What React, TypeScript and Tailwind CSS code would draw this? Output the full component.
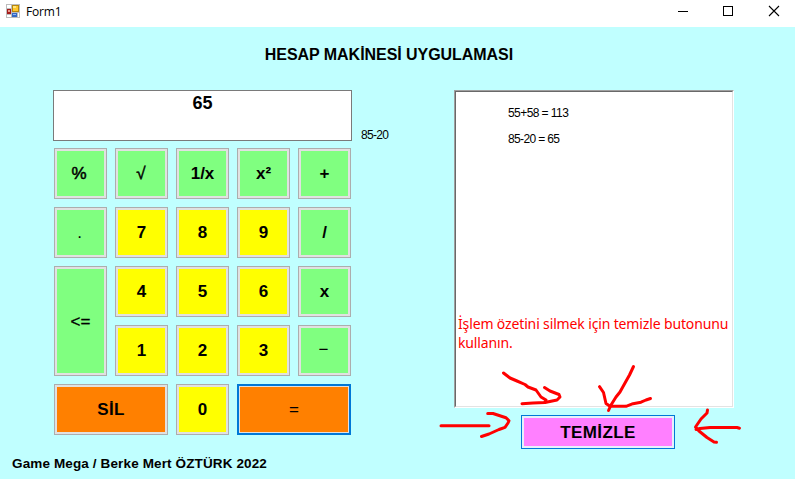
type Tone = 'green' | 'yellow' | 'orange';

interface Key {
  label: string;
  tone: Tone;
  span?: string;
  text?: string;
  focused?: boolean;
}

const tones: Record<Tone, string> = {
  green: 'bg-[#80ff80]',
  yellow: 'bg-[#ffff00]',
  orange: 'bg-[#ff8000]',
};

const keys: Key[] = [
  { label: '%', tone: 'green', text: 'font-normal pr-[3px] pb-px [-webkit-text-stroke:0.5px_#000]' },
  { label: '√', tone: 'green', text: 'font-normal pr-px [-webkit-text-stroke:0.5px_#000]' },
  { label: '1/x', tone: 'green' },
  { label: 'x²', tone: 'green' },
  { label: '+', tone: 'green' },
  { label: '.', tone: 'green', text: 'font-normal pr-[2px]' },
  { label: '7', tone: 'yellow' },
  { label: '8', tone: 'yellow' },
  { label: '9', tone: 'yellow' },
  { label: '/', tone: 'green' },
  { label: '<=', tone: 'green', span: 'row-span-2', text: 'font-normal [-webkit-text-stroke:0.3px_#000]' },
  { label: '4', tone: 'yellow' },
  { label: '5', tone: 'yellow' },
  { label: '6', tone: 'yellow' },
  { label: 'x', tone: 'green' },
  { label: '1', tone: 'yellow' },
  { label: '2', tone: 'yellow' },
  { label: '3', tone: 'yellow' },
  { label: '−', tone: 'green', text: 'font-normal pr-[2px] pb-[3px]' },
  { label: 'SİL', tone: 'orange', span: 'col-span-2', text: 'tracking-[0.3px]' },
  { label: '0', tone: 'yellow' },
  { label: '=', tone: 'orange', span: 'col-span-2', text: 'font-normal', focused: true },
];

function CalcKey({ label, tone, span = '', text = '', focused }: Key) {
  const frame = focused ? 'border-2 border-[#0078d7] p-px' : 'border border-[#adadad] p-[2px]';
  const weight = text.includes('font-normal') ? '' : 'font-bold';
  return (
    <button className={`flex bg-[#e1e1e1] ${frame} ${span}`}>
      <span className={`flex h-full w-full items-center justify-center text-[17px] leading-none ${weight} ${tones[tone]} ${text}`}>
        {label}
      </span>
    </button>
  );
}

function TitleBar() {
  return (
    <header className="flex h-[27px] items-start bg-white">
      <svg className="ml-[6px] mt-[4px]" width="14" height="14" shapeRendering="crispEdges">
        <rect width="14" height="14" fill="#bdbdbd" />
        <rect x="1" y="1" width="4" height="3" fill="#fff" />
        <rect x="1" y="11" width="4" height="2" fill="#fff" />
        <rect x="12" y="9" width="1" height="4" fill="#fff" />
        <rect x="1" y="5" width="4" height="5" fill="#a51c1c" />
        <rect x="2" y="6" width="2" height="2" fill="#ec9a8c" />
        <rect x="6" y="1" width="7" height="7" fill="#b8860b" />
        <rect x="7" y="2" width="5" height="5" fill="#ffc72c" />
        <rect x="7" y="2" width="3" height="2" fill="#ffe680" />
        <rect x="6" y="9" width="5" height="4" fill="#3569c4" />
        <rect x="7" y="10" width="3" height="1" fill="#8fb8f5" />
      </svg>
      <span className="ml-[6px] mt-[4px] font-['Open_Sans',sans-serif] text-[12px] leading-4 tracking-[-0.2px]">Form1</span>
      <svg className="ml-auto mr-[15px] mt-[4px]" width="103" height="14" fill="none" stroke="#000">
        <path d="M1 7.5H11" />
        <rect x="46.500" y="2.500" width="9" height="9" />
        <path d="M92 2L102 12M102 2L92 12" strokeWidth="1.100" />
      </svg>
    </header>
  );
}

function Arrows() {
  return (
    <svg className="pointer-events-none absolute left-0 top-0" width="795" height="479" fill="none" stroke="#f00" strokeWidth="3" strokeLinecap="round" strokeLinejoin="round">
      <path d="M503.500 373L510 378L517 381L525 384.500L528 387L536 390L541 397L546 400L545 402" />
      <path d="M544.500 387.500L550 391L559 394.500L560 397L557 400L545 402.500L533 403L522 403.700" />
      <path d="M441 425.700H489" />
      <path d="M487.700 413.500H493L506 417.700L509 420.700L508 423L505 427.300L499 429.500L489 434L481.500 436.500" />
      <path d="M633.500 366.500L629.500 375L625 383L620 392L616 397L611 405L608.500 410.500" />
      <path d="M599.500 386.700L603.500 392.500L606 403.500L610 406.300H626L633 403.700L641 402.200L646 400L650.500 398.500" />
      <path d="M739.500 428.200L737 427.500H710L700 428.500L696 429.500" />
      <path d="M707.500 410L707 413L701 419L695.500 427L699 431L707 437.500L714 442L716.500 442.300" />
    </svg>
  );
}

export default function App() {
  return (
    <div className="relative flex h-[479px] w-[795px] flex-col overflow-hidden bg-[#c0ffff] font-['Liberation_Sans',Arial,sans-serif] text-black">
      <TitleBar />
      <h1 className="mt-[19px] h-[18px] w-[778px] text-center text-[16px] font-bold leading-[18px] tracking-[-0.05px]">HESAP MAKİNESİ UYGULAMASI</h1>
      <main className="mt-[26px] flex h-[359px] items-start pl-[53px]">
        <section className="w-[299px]">
          <div className="h-[51px] border border-[#7a7a7a] bg-white pt-[2px] text-center text-[18px] font-bold leading-[20px]">65</div>
          <div className="ml-px mt-[7px] grid grid-cols-[repeat(5,53px)] grid-rows-[repeat(5,51px)] gap-2">
            {keys.map((key) => (
              <CalcKey key={key.label} {...key} />
            ))}
          </div>
        </section>
        <span className="ml-[9px] mt-[37px] w-[93px] text-[12px] leading-4 tracking-[-0.7px]">85-20</span>
        <section className="flex w-[280px] flex-col">
          <div className="h-[318px] border border-b-white border-l-[#a0a0a0] border-r-white border-t-[#a0a0a0]">
            <div className="flex h-full flex-col border border-b-[#e3e3e3] border-l-[#696969] border-r-[#e3e3e3] border-t-[#696969] bg-white pt-[13px]">
              <p className="ml-[52px] text-[12px] leading-4 tracking-[-0.57px]">55+58 = 113</p>
              <p className="ml-[52px] mt-[10px] text-[12px] leading-4 tracking-[-0.63px]">85-20 = 65</p>
              <p className="ml-[2px] mt-[167px] whitespace-nowrap font-['Noto_Sans',sans-serif] text-[14px] leading-[19px] tracking-[-0.14px] text-[#f00]">
                İşlem özetini silmek için temizle butonunu
                <br />
                kullanın.
              </p>
            </div>
          </div>
          <button className="ml-[67px] mt-[7px] flex h-[34px] w-[154px] border border-[#0078d7] bg-[#e5f1fb] p-[2px]">
            <span className="flex h-full w-full items-center justify-center bg-[#ff80ff] text-[17px] font-bold leading-none tracking-[0.4px]">TEMİZLE</span>
          </button>
        </section>
      </main>
      <footer className="ml-[12px] mt-[7px] text-[13.500px] font-bold leading-4 tracking-[0.13px]">Game Mega / Berke Mert ÖZTÜRK 2022</footer>
      <Arrows />
    </div>
  );
}
